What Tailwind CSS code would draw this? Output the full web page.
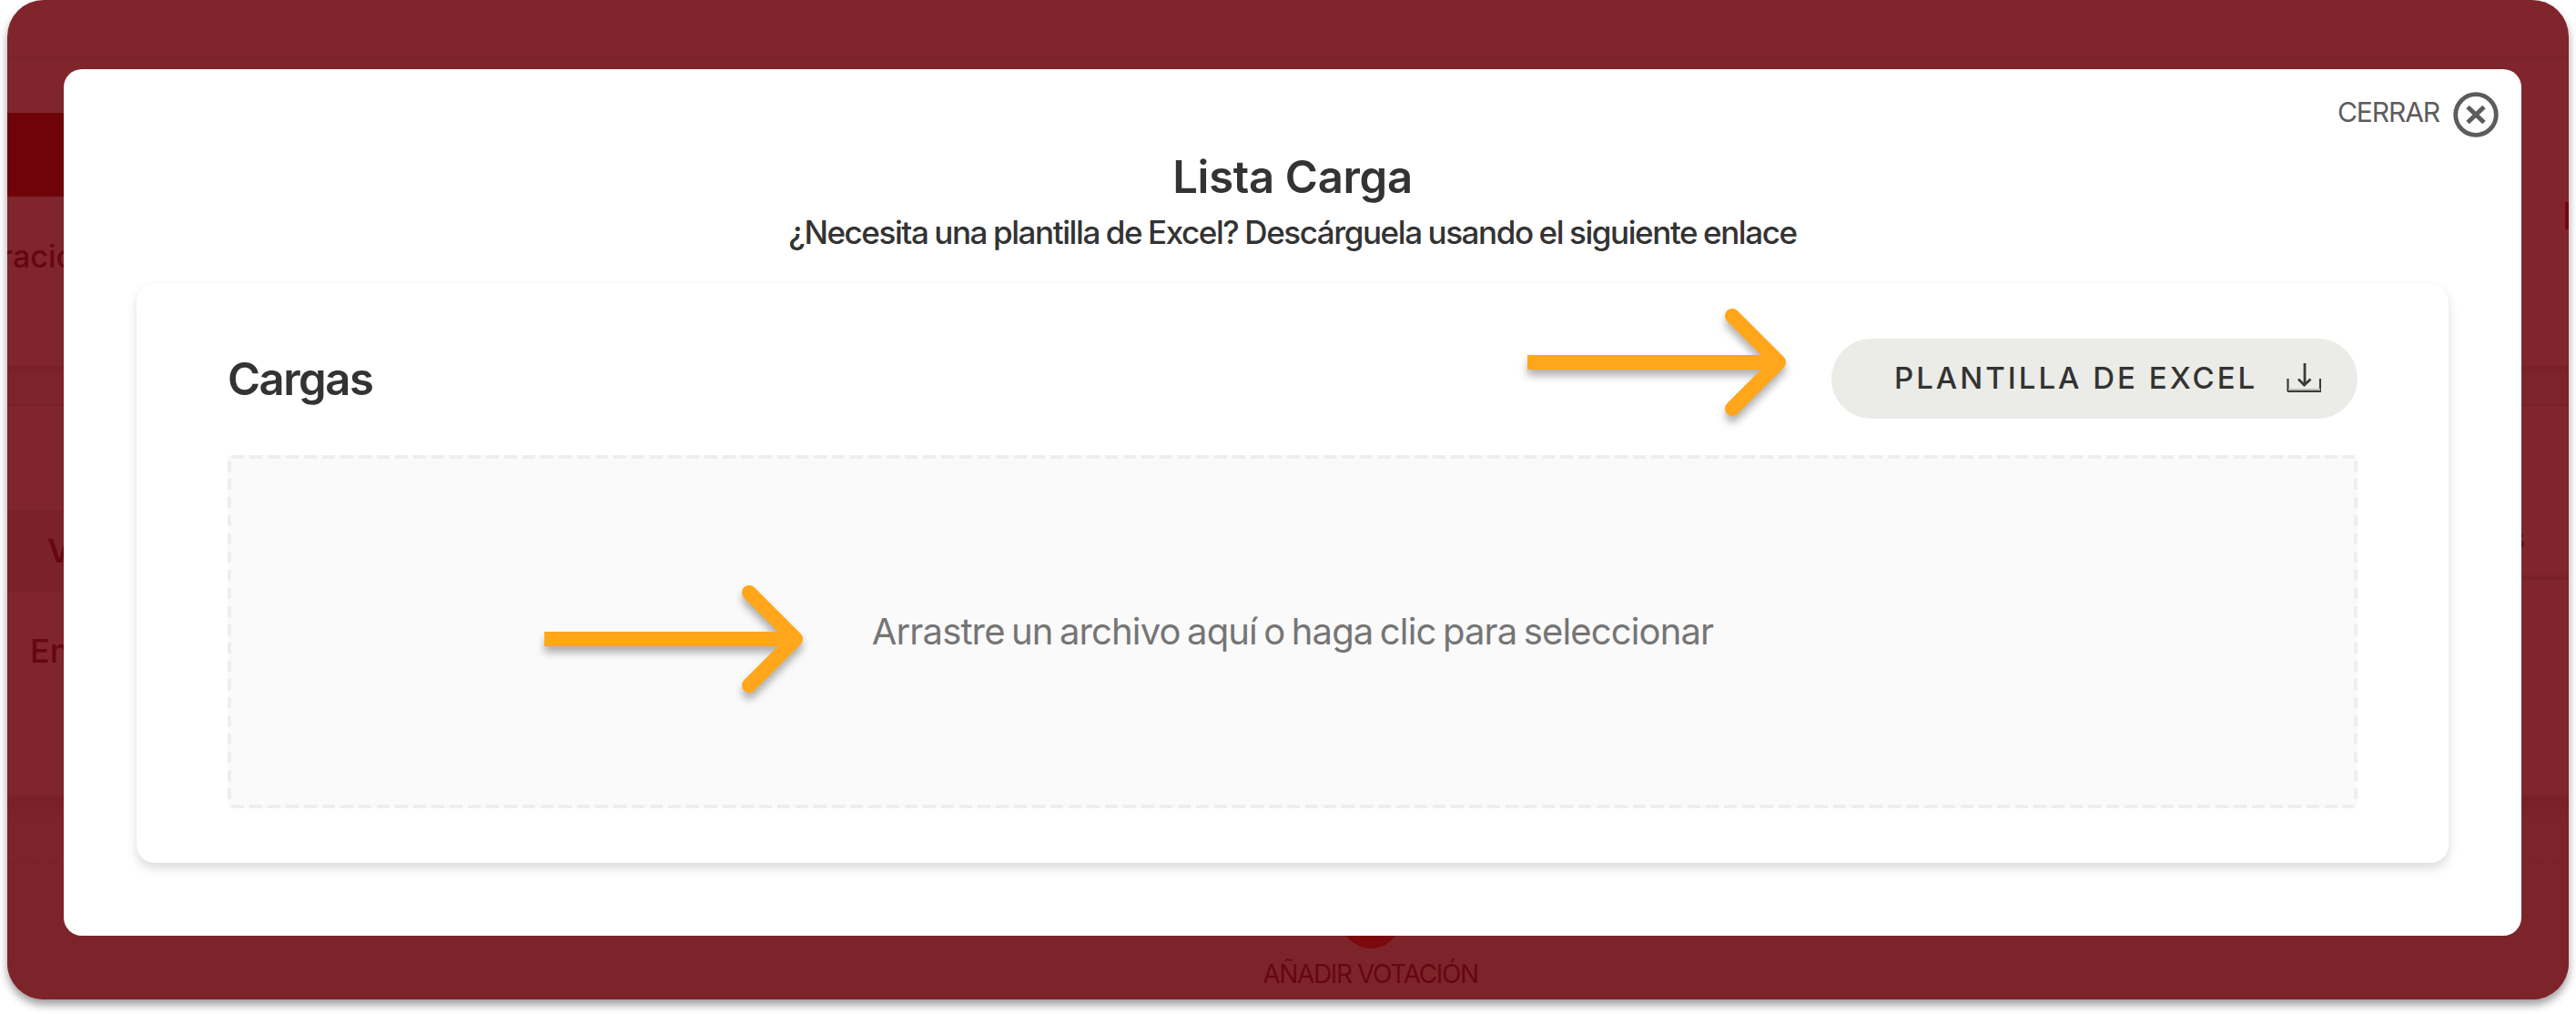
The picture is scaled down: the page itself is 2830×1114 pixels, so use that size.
<!DOCTYPE html>
<html lang="es">
<head>
<meta charset="utf-8">
<title>Lista Carga</title>
<script src="https://cdn.jsdelivr.net/npm/@tailwindcss/browser@4"></script>
</head>
<body class="h-[1114px] overflow-hidden bg-white px-2 font-[Inter,sans-serif]">
<div class="relative h-[1098px] w-[2814px] rounded-[40px] shadow-[0_6px_10px_0_rgba(0,0,0,0.38)]">

  <!-- Page behind the overlay -->
  <div class="flex h-full flex-col overflow-hidden rounded-[40px] bg-[#7f252b] text-[#650710]">
    <div class="h-[62px] shrink-0"></div>
    <div class="h-[2px] shrink-0 bg-[#7b2229]"></div>
    <div class="h-[60px] shrink-0"></div>
    <div class="h-[92px] w-[400px] shrink-0 bg-[#6e0409]"></div>
    <div class="flex h-[186px] shrink-0 items-start justify-between pt-1.5">
      <div class="-ml-[7px] mt-[40px] text-[34px] leading-[40px] font-medium">ración</div>
      <div class="h-[30px] w-[4px] bg-[#6e0912]"></div>
    </div>
    <div class="h-[12px] shrink-0 bg-linear-to-b from-[#792027] to-[#7d242a]"></div>
    <div class="h-[30px] shrink-0 bg-[#7d242a]"></div>
    <div class="h-[2px] shrink-0 bg-[#7a2128]"></div>
    <div class="h-[114px] shrink-0"></div>
    <div class="flex h-[90px] shrink-0 justify-between">
      <div class="flex w-[600px] items-center bg-[#7b2229] pl-[44px] text-[36px] font-semibold">Votación</div>
      <div class="flex w-[600px] flex-col pl-[534px]">
        <div class="h-[72px] pt-[16px] text-[32px] leading-[32px] font-semibold">s</div>
        <div class="-ml-[534px] h-[5px] bg-[#7a2128]"></div>
      </div>
    </div>
    <div class="h-[112px] shrink-0 pt-[45px] pl-[25px] text-[36px] leading-[40px] font-medium">En</div>
    <div class="h-[112px] shrink-0"></div>
    <div class="h-[30px] shrink-0 bg-linear-to-b from-[#792027] to-[#7d242a]"></div>
    <div class="h-[42px] shrink-0 bg-[#7d242a]"></div>
    <div class="h-[2px] shrink-0 bg-[repeating-linear-gradient(90deg,#7a2128_0_14px,#7d242a_14px_22px)]"></div>
    <div class="flex flex-1 flex-col items-center bg-[#7d242a] pt-[28px] pr-[12px]">
      <div class="ml-[193px] size-[66px] shrink-0 rounded-full bg-[#7b090d]"></div>
      <div class="ml-[193px] mt-[10px] text-[28px] leading-[36px] tracking-[-1.36px] whitespace-nowrap">AÑADIR VOTACIÓN</div>
    </div>
  </div>

  <!-- Modal -->
  <div class="absolute left-[62px] top-[76px] flex h-[952px] w-[2700px] flex-col rounded-[20px] bg-white px-20 pt-6 text-[#333]">
    <div class="-mr-[55px] flex h-[52px] items-center justify-end gap-[15px] text-[#5c5c5c]">
      <span class="pb-[6px] text-[30px] leading-[40px] tracking-[-1.1px]">CERRAR</span>
      <svg class="size-[50px]" viewBox="0 0 50 50" fill="none" stroke="currentColor"><circle cx="25" cy="25" r="22.3" stroke-width="4.8"/><path d="M16 16.5 34 33.5M34 16.5 16 33.5" stroke-width="5"/></svg>
    </div>
    <h1 class="mt-[15px] text-center text-[49px] leading-[56px] font-semibold tracking-[-0.3px]">Lista Carga</h1>
    <p class="mt-[8px] text-center text-[35px] leading-[48px] font-[450] tracking-[-1.42px] [word-spacing:-1px]">¿Necesita una plantilla de Excel? Descárguela usando el siguiente enlace</p>

    <div class="mt-[33px] flex h-[636px] shrink-0 flex-col rounded-[20px] bg-white px-[100px] pt-[60px] shadow-[0_6px_12px_rgba(0,0,0,0.14)]">
      <div class="flex h-[88px] items-center justify-between">
        <h2 class="pt-[2px] text-[49px] leading-[56px] font-semibold tracking-[-1.5px]">Cargas</h2>
        <button class="flex h-[88px] w-[578px] items-center justify-between rounded-full bg-[#ebece7] pl-[69px] pr-[40px] text-[33px] font-[550] tracking-[3px] whitespace-nowrap">
          PLANTILLA DE EXCEL
          <svg class="h-[34px] w-[38px]" viewBox="0 0 38 34" fill="none" stroke="#3b3b3b"><path d="M20 -1V24M13 17.500 19.5 24 26.500 17.500" stroke-width="2.8"/><path d="M1.500 17V31M37 17V31" stroke-width="2.200"/><path d="M2 29H37" stroke="#bcbdb9" stroke-width="2"/><path d="M1 31H38" stroke-width="2"/></svg>
        </button>
      </div>
      <div class="relative mt-10 flex h-[388px] items-center justify-center rounded-[4px] bg-[#fafafa] text-[40px] tracking-[-0.86px] text-[#757575] [word-spacing:-3px]">
        <svg class="absolute inset-0 h-full w-full" fill="none" stroke="#eee" stroke-width="4" stroke-dasharray="12 8"><path d="M4 2H2336M4 386H2336" stroke-dasharray="14 6"/><path d="M2 6V384M2338 6V384"/></svg>
        <span class="pb-[1px]">Arrastre un archivo aquí o haga clic para seleccionar</span>
      </div>
    </div>
  </div>

  <!-- Pointer arrows laid over the dialog -->
  <svg class="absolute left-[1670px] top-[330px] h-[140px] w-[300px] drop-shadow-[0_7px_4px_rgba(0,0,0,0.3)]" viewBox="0 0 300 140" fill="none" stroke="#ffa61a" stroke-width="16"><path d="M0 68H272"/><path d="M225 17 276 68 225 119" stroke-linecap="round" stroke-linejoin="round"/></svg>
  <svg class="absolute left-[590px] top-[634px] h-[140px] w-[300px] drop-shadow-[0_7px_4px_rgba(0,0,0,0.3)]" viewBox="0 0 300 140" fill="none" stroke="#ffa61a" stroke-width="16"><path d="M0 68H272"/><path d="M225 17 276 68 225 119" stroke-linecap="round" stroke-linejoin="round"/></svg>
</div>
</body>
</html>
